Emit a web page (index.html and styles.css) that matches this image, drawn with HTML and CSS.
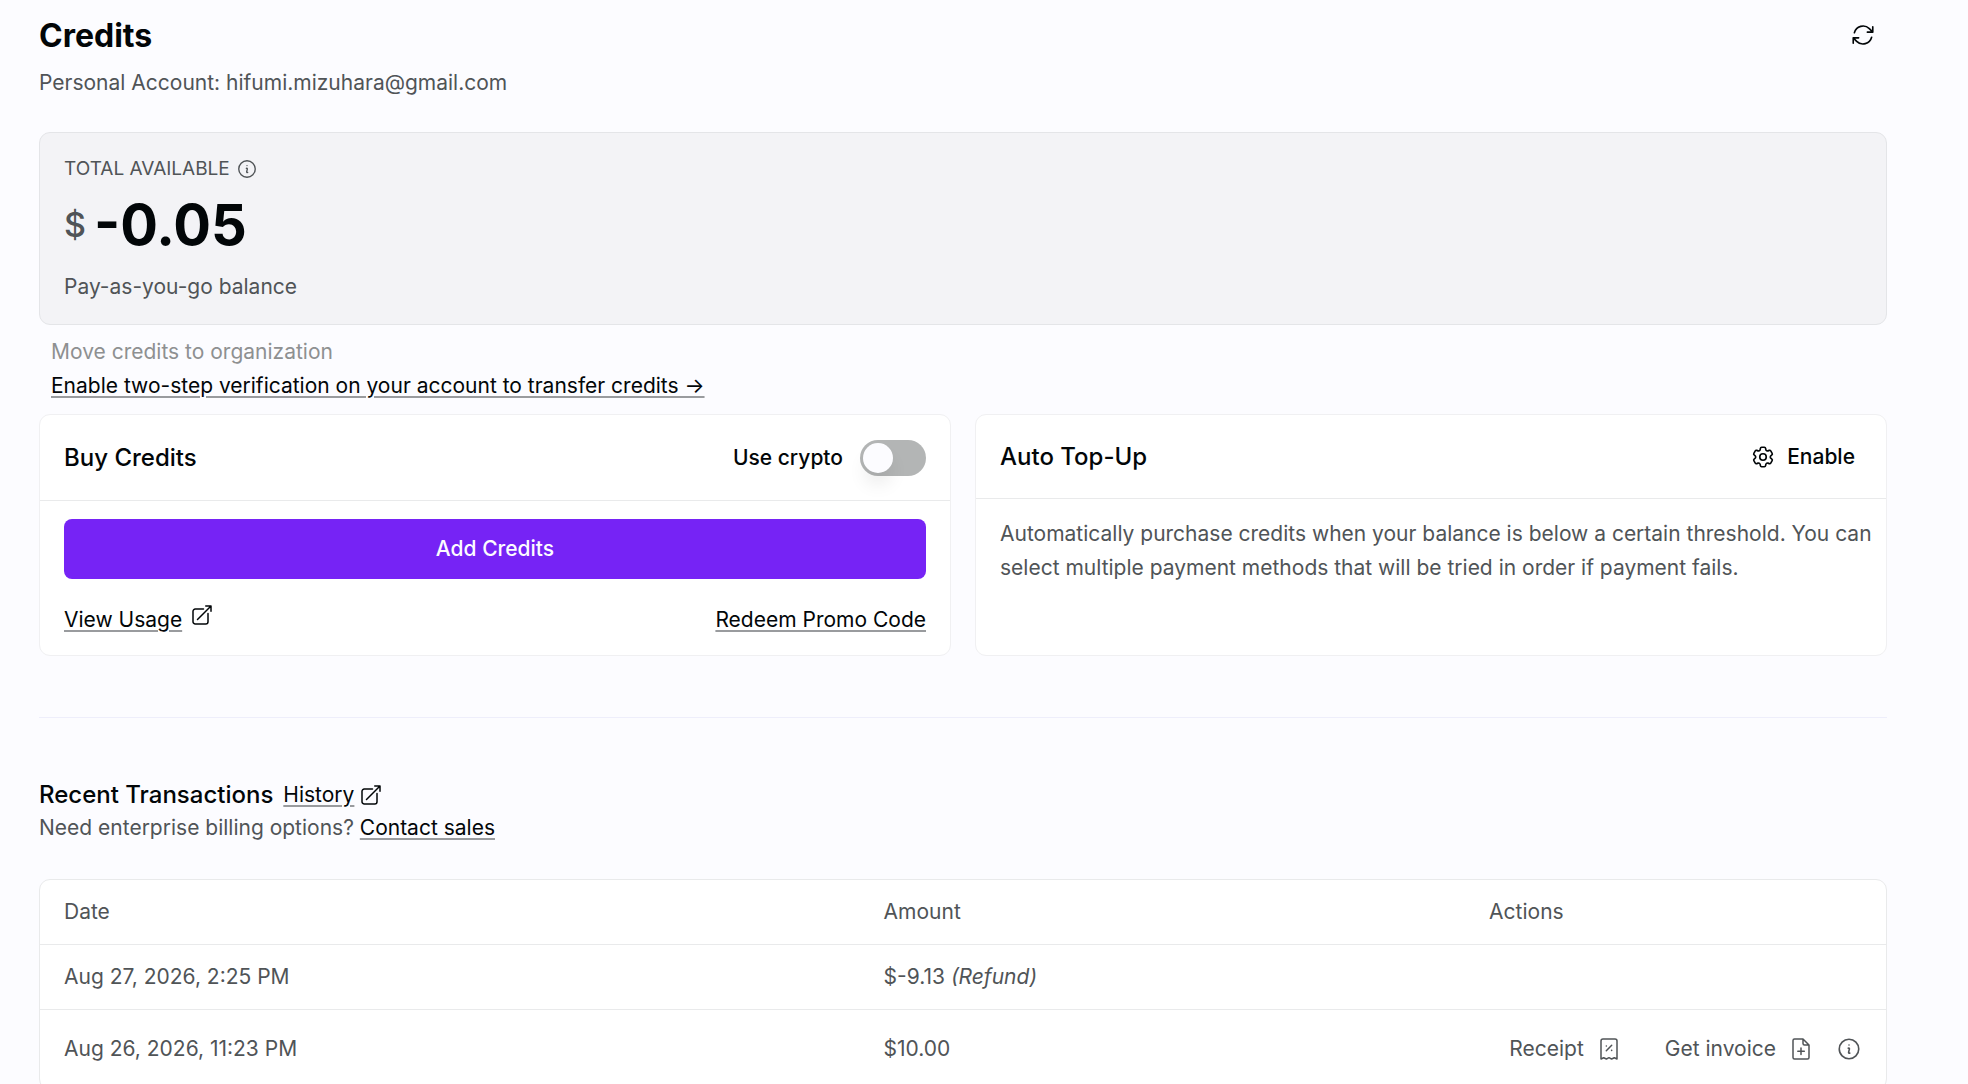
FILE: index.html
```html
<!DOCTYPE html>
<html lang="en">
<head>
<meta charset="UTF-8">
<meta name="viewport" content="width=device-width, initial-scale=1.0">
<title>Credits</title>
<link rel="stylesheet" href="styles.css">
</head>
<body>

<svg class="sprite" aria-hidden="true">
  <symbol id="icon-refresh" viewBox="0 0 24 24">
    <path d="M16.023 9.348h4.992v-.001M2.985 19.644v-4.992m0 0h4.992m-4.993 0 3.181 3.183a8.25 8.25 0 0 0 13.803-3.7M4.031 9.865a8.25 8.25 0 0 1 13.803-3.7l3.181 3.182m0-4.991v4.99"/>
  </symbol>
  <symbol id="icon-external" viewBox="0 0 24 24">
    <path d="M13.5 6H5.25A2.25 2.25 0 0 0 3 8.25v10.5A2.25 2.25 0 0 0 5.25 21h10.5A2.25 2.25 0 0 0 18 18.75V10.5m-10.5 6L21 3m0 0h-5.25M21 3v5.25"/>
  </symbol>
  <symbol id="icon-info" viewBox="0 0 24 24">
    <path d="m11.25 11.25.041-.02a.75.75 0 0 1 1.063.852l-.708 2.836a.75.75 0 0 0 1.063.853l.041-.021M21 12a9 9 0 1 1-18 0 9 9 0 0 1 18 0Zm-9-3.75h.008v.008H12V8.25Z"/>
  </symbol>
  <symbol id="icon-cog" viewBox="0 0 24 24">
    <path d="M9.594 3.94c.09-.542.56-.94 1.11-.94h2.593c.55 0 1.02.398 1.11.94l.213 1.281c.063.374.313.686.645.87.074.04.147.083.22.127.325.196.72.257 1.075.124l1.217-.456a1.125 1.125 0 0 1 1.37.49l1.296 2.247a1.125 1.125 0 0 1-.26 1.431l-1.003.827c-.293.241-.438.613-.43.992a7.723 7.723 0 0 1 0 .255c-.008.378.137.75.43.991l1.004.827c.424.35.534.955.26 1.43l-1.298 2.247a1.125 1.125 0 0 1-1.369.491l-1.217-.456c-.355-.133-.75-.072-1.076.124a6.47 6.47 0 0 1-.22.128c-.331.183-.581.495-.644.869l-.213 1.281c-.09.543-.56.94-1.11.94h-2.594c-.55 0-1.019-.398-1.11-.94l-.213-1.281c-.062-.374-.312-.686-.644-.87a6.52 6.52 0 0 1-.22-.127c-.325-.196-.72-.257-1.076-.124l-1.217.456a1.125 1.125 0 0 1-1.369-.49l-1.297-2.247a1.125 1.125 0 0 1 .26-1.431l1.004-.827c.292-.24.437-.613.43-.991a6.932 6.932 0 0 1 0-.255c.007-.38-.138-.751-.43-.992l-1.004-.827a1.125 1.125 0 0 1-.26-1.43l1.297-2.247a1.125 1.125 0 0 1 1.37-.491l1.216.456c.356.133.751.072 1.076-.124.072-.044.146-.086.22-.128.332-.183.582-.495.644-.869l.214-1.28Z"/>
    <path d="M15 12a3 3 0 1 1-6 0 3 3 0 0 1 6 0Z"/>
  </symbol>
  <symbol id="icon-receipt" viewBox="0 0 24 24">
    <path d="M4 22V4a2 2 0 0 1 2-2h12a2 2 0 0 1 2 2v18l-2.700-1.300L14.600 22 12 20.700 9.400 22l-2.700-1.300ZM9.300 13.700l5.400-5.400M9.300 8.900h.1v.1h-.1ZM14.600 13.300h.1v.1h-.1Z"/>
  </symbol>
  <symbol id="icon-invoice" viewBox="0 0 24 24">
    <path d="M14 2H5.500A1.500 1.500 0 0 0 4 3.500v17A1.500 1.500 0 0 0 5.500 22h13a1.500 1.500 0 0 0 1.500-1.500V8ZM14 2v4.500A1.500 1.500 0 0 0 15.500 8H20M12 11v6.500M8.800 14.200h6.500"/>
  </symbol>
</svg>

<main class="page">
  <header class="page-header">
    <div>
      <h1 class="title">Credits</h1>
      <p class="muted">Personal Account: hifumi.mizuhara@gmail.com</p>
    </div>
    <button class="icon-button refresh" type="button" aria-label="Refresh">
      <svg class="icon"><use href="#icon-refresh"/></svg>
    </button>
  </header>

  <section class="balance">
    <div class="balance-label">
      <span>TOTAL AVAILABLE</span>
      <svg class="icon icon-small"><use href="#icon-info"/></svg>
    </div>
    <div class="balance-amount">
      <span class="currency">$</span>
      <span class="amount">-0.05</span>
    </div>
    <p class="muted">Pay-as-you-go balance</p>
  </section>

  <div class="transfer">
    <p class="disabled">Move credits to organization</p>
    <a class="link" href="#">Enable two-step verification on your account to transfer credits →</a>
  </div>

  <div class="cards">
    <section class="card">
      <div class="card-header">
        <h2 class="card-title">Buy Credits</h2>
        <label class="crypto" for="use-crypto">
          Use crypto
          <input class="toggle" type="checkbox" id="use-crypto">
        </label>
      </div>
      <div class="card-body">
        <button class="primary" type="button">Add Credits</button>
        <div class="card-links">
          <span class="link-group">
            <a class="link" href="#">View Usage</a>
            <svg class="icon icon-medium"><use href="#icon-external"/></svg>
          </span>
          <a class="link" href="#">Redeem Promo Code</a>
        </div>
      </div>
    </section>

    <section class="card">
      <div class="card-header">
        <h2 class="card-title">Auto Top-Up</h2>
        <button class="enable" type="button">
          <svg class="icon"><use href="#icon-cog"/></svg>
          Enable
        </button>
      </div>
      <div class="card-body card-text">
        <p class="muted">Automatically purchase credits when your balance is below a certain threshold. You can select multiple payment methods that will be tried in order if payment fails.</p>
      </div>
    </section>
  </div>

  <hr class="divider">

  <div class="recent">
    <h2 class="recent-title">Recent Transactions</h2>
    <a class="link" href="#">History</a>
    <svg class="icon icon-medium"><use href="#icon-external"/></svg>
  </div>
  <p class="muted">Need enterprise billing options? <a class="link" href="#">Contact sales</a></p>

  <table class="transactions">
    <thead>
      <tr>
        <th class="col-date">Date</th>
        <th class="col-amount">Amount</th>
        <th>Actions</th>
      </tr>
    </thead>
    <tbody>
      <tr>
        <td>Aug 27, 2026, 2:25 PM</td>
        <td>$-9.13 <em>(Refund)</em></td>
        <td></td>
      </tr>
      <tr class="row-actions">
        <td>Aug 26, 2026, 11:23 PM</td>
        <td>$10.00</td>
        <td>
          <div class="actions">
            <button class="action" type="button">Receipt <svg class="icon icon-medium"><use href="#icon-receipt"/></svg></button>
            <button class="action" type="button">Get invoice <svg class="icon icon-medium"><use href="#icon-invoice"/></svg></button>
            <button class="icon-button" type="button" aria-label="Details"><svg class="icon"><use href="#icon-info"/></svg></button>
          </div>
        </td>
      </tr>
    </tbody>
  </table>
</main>

</body>
</html>
```
FILE: styles.css
```css
* {
  box-sizing: border-box;
}

body {
  margin: 0;
  background-color: #fcfcff;
  color: #020608;
  font-family: Inter, "Liberation Sans", sans-serif;
  font-size: 21px;
  line-height: 34px;
}

h1, h2, p {
  margin: 0;
}

button {
  padding: 0;
  border: none;
  background: none;
  color: inherit;
  font: inherit;
  cursor: pointer;
}

.sprite {
  display: none;
}

.page {
  height: 100vh;
  padding: 16px 81px 0 39px;
  overflow-y: auto;
  scrollbar-width: none;
}

.page-header {
  display: flex;
  justify-content: space-between;
  align-items: flex-start;
  margin-bottom: 32px;
}

.title {
  margin-bottom: 10px;
  font-size: 32px;
  font-weight: 700;
  line-height: 40px;
}

.muted {
  color: #505457;
}

.disabled {
  color: #8e9091;
}

/* Icons */
.icon {
  display: block;
  flex: none;
  width: 26px;
  height: 26px;
  fill: none;
  stroke: currentColor;
  stroke-width: 1.5;
  stroke-linecap: round;
  stroke-linejoin: round;
}

.icon-small {
  width: 22px;
  height: 22px;
}

.icon-medium {
  width: 24px;
  height: 24px;
}

.icon-button {
  display: flex;
}

.refresh {
  padding: 6px 11px;
}

.link {
  color: #020608;
  text-decoration: underline;
  text-decoration-color: #999b9e;
  text-decoration-thickness: 2px;
  text-underline-offset: 3px;
}

/* Balance */
.balance {
  padding: 24px 24px 20px;
  border: 1px solid #e4e5e8;
  border-radius: 11px;
  background-color: #f3f3f6;
}

.balance-label {
  display: flex;
  align-items: center;
  gap: 6px;
  color: #505457;
  font-size: 19px;
  line-height: 24px;
}

.balance-amount {
  display: flex;
  align-items: center;
  gap: 8px;
  margin: 12px 0 13px;
  line-height: 64px;
}

.currency {
  color: #505457;
  font-size: 34px;
  font-weight: 500;
}

.amount {
  font-size: 56px;
  font-weight: 700;
}

.transfer {
  padding: 10px 12px 11px;
}

/* Cards */
.cards {
  display: grid;
  grid-template-columns: 1fr 1fr;
  gap: 24px;
}

.card {
  border: 1px solid #f0f0f2;
  border-radius: 11px;
  background-color: #fff;
}

.card-header {
  display: flex;
  justify-content: space-between;
  align-items: center;
  padding: 25px 24px 24px;
  border-bottom: 1px solid #e9eaeb;
}

.card-title {
  font-size: 24px;
  font-weight: 500;
  line-height: 34px;
}

.card-body {
  padding: 18px 24px;
}

.card-text {
  padding-right: 12px;
}

.crypto {
  display: flex;
  align-items: center;
  gap: 17px;
  font-weight: 500;
}

.toggle {
  appearance: none;
  width: 66px;
  height: 36px;
  margin: 0;
  padding: 3px;
  border-radius: 18px;
  background-color: #b3b5b5;
  cursor: pointer;
}

.toggle::before {
  content: "";
  display: block;
  width: 30px;
  height: 30px;
  border-radius: 50%;
  background-color: #fcfcff;
  box-shadow: 0 13px 20px -4px rgba(0, 0, 0, 0.12);
}

.toggle:checked::before {
  margin-left: auto;
}

.primary {
  width: 100%;
  height: 60px;
  margin-bottom: 24px;
  border-radius: 8px;
  background-color: #7623f5;
  color: #fcfcff;
  font-weight: 500;
}

.card-links {
  display: flex;
  justify-content: space-between;
}

.link-group {
  display: flex;
  gap: 8px;
}

.enable {
  display: flex;
  align-items: center;
  gap: 11px;
  padding-right: 7px;
  font-weight: 500;
}

/* Transactions */
.divider {
  height: 1px;
  margin: 61px 0;
  border: none;
  background-color: #eeeefb;
}

.recent {
  display: flex;
  align-items: center;
  line-height: 32px;
}

.recent-title {
  margin-right: 10px;
  font-size: 24px;
  font-weight: 500;
}

.recent .icon {
  margin-left: 5px;
}

.transactions {
  width: 100%;
  margin-top: 34px;
  border: 1px solid #e9eaeb;
  border-radius: 11px;
  border-spacing: 0;
  background-color: #fff;
  color: #505457;
  table-layout: fixed;
}

.transactions th,
.transactions td {
  height: 65px;
  padding: 0 24px;
  border-bottom: 1px solid #e9eaeb;
  font-weight: 400;
  text-align: left;
}

.transactions .row-actions td {
  height: 79px;
}

.col-date {
  width: 44.4%;
}

.col-amount {
  width: 32.8%;
}

.actions {
  display: flex;
  justify-content: flex-end;
  align-items: center;
}

.action {
  display: flex;
  align-items: center;
  gap: 13px;
  padding: 0 23px 0 0;
  white-space: nowrap;
}

.action + .action {
  margin-left: 21px;
}
```
